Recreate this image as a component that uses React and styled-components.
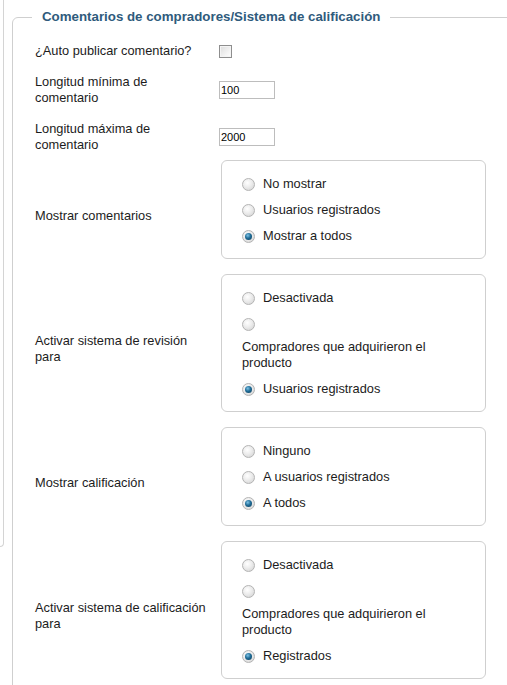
import styled, { createGlobalStyle } from "styled-components";

const GlobalStyle = createGlobalStyle`
    html, body {
        margin: 0;
        padding: 0;
        background: #ffffff;
        overflow: hidden;
    }
    body {
        font-family: "Liberation Sans", Arial, sans-serif;
        font-size: 12.8px;
        color: #1c1c1c;
    }
`;

const settings = [
    {
        id: "showReviews",
        label: "Mostrar comentarios",
        options: [
            { text: "No mostrar" },
            { text: "Usuarios registrados" },
            { text: "Mostrar a todos", checked: true }
        ]
    },
    {
        id: "reviewSystem",
        label: "Activar sistema de revisión para",
        options: [
            { text: "Desactivada" },
            { text: "Compradores que adquirieron el producto", wrapped: true },
            { text: "Usuarios registrados", checked: true }
        ]
    },
    {
        id: "showRating",
        label: "Mostrar calificación",
        options: [
            { text: "Ninguno" },
            { text: "A usuarios registrados" },
            { text: "A todos", checked: true }
        ]
    },
    {
        id: "ratingSystem",
        label: "Activar sistema de calificación para",
        options: [
            { text: "Desactivada" },
            { text: "Compradores que adquirieron el producto", wrapped: true },
            { text: "Registrados", checked: true }
        ]
    }
];

export default function App() {
    return (
        <Page>
            <GlobalStyle />
            <SideEdge />
            <Panel>
                <Legend>Comentarios de compradores/Sistema de calificación</Legend>
                <Rows>
                    <Row>
                        <Label>¿Auto publicar comentario?</Label>
                        <Value>
                            <Checkbox />
                        </Value>
                    </Row>
                    <Row>
                        <Label>Longitud mínima de comentario</Label>
                        <Value>
                            <NumberField defaultValue="100" />
                        </Value>
                    </Row>
                    <Row>
                        <Label>Longitud máxima de comentario</Label>
                        <Value>
                            <NumberField defaultValue="2000" />
                        </Value>
                    </Row>
                    {settings.map(setting => (
                        <BoxRow key={setting.id}>
                            <BoxLabel>{setting.label}</BoxLabel>
                            <OptionBox>
                                {setting.options.map(option => (
                                    option.wrapped ? (
                                        <div key={option.text}>
                                            <Option>
                                                <Radio $checked={option.checked} />
                                            </Option>
                                            <WrappedText>{option.text}</WrappedText>
                                        </div>
                                    ) : (
                                        <Option key={option.text}>
                                            <Radio $checked={option.checked} />
                                            <span>{option.text}</span>
                                        </Option>
                                    )
                                ))}
                            </OptionBox>
                        </BoxRow>
                    ))}
                </Rows>
            </Panel>
        </Page>
    );
}

const Page = styled.div`
    display: flex;
    align-items: flex-start;
    width: 507px;
    height: 685px;
    overflow: hidden;
`;

const SideEdge = styled.div`
    flex: none;
    width: 3px;
    height: 546px;
    border-right: 1px solid #d4d4d4;
    border-bottom: 1px solid #d4d4d4;
    border-bottom-right-radius: 5px;
`;

const Panel = styled.fieldset`
    flex: none;
    width: 560px;
    margin: 9px 0 0 8px;
    padding: 0 0 40px 19px;
    border: 1px solid #cfcfcf;
    border-radius: 6px;
`;

const Legend = styled.legend`
    padding: 0 10px;
    font-size: 13.3px;
    font-weight: bold;
    line-height: 16px;
    color: #2f5b7c;
`;

const Rows = styled.div`
    display: flex;
    flex-direction: column;
    gap: 5px;
    padding: 8px 0 0 3px;
`;

const Row = styled.div`
    display: flex;
    align-items: center;
    padding-top: 10px;
`;

const Label = styled.div`
    width: 176px;
    margin-right: 8px;
    flex: none;
    line-height: 16px;
`;

const Value = styled.div`
    display: flex;
    align-items: center;
`;

const Checkbox = styled.span`
    display: block;
    width: 11px;
    height: 11px;
    border: 1px solid #8e8e8e;
    background: linear-gradient(135deg, #dcdcdc 0%, #f2f2f2 60%, #ffffff 100%);
    box-shadow: inset 0 0 0 1px #f4f4f4;
`;

const NumberField = styled.input`
    box-sizing: border-box;
    width: 56px;
    height: 18px;
    margin: 0;
    padding: 0 1px;
    border: 1px solid #bdbdbd;
    font-family: "Liberation Sans", Arial, sans-serif;
    font-size: 11px;
    color: #000000;
    outline: none;
`;

const BoxRow = styled.div`
    display: flex;
    align-items: center;
    padding: 2px 0 8px;
`;

const BoxLabel = styled(Label)`
    padding-top: 12px;
`;

const OptionBox = styled.div`
    box-sizing: border-box;
    width: 265px;
    margin-left: 2px;
    padding: 10px 0 9px 20px;
    border: 1px solid #cfcfcf;
    border-radius: 6px;
`;

const Option = styled.div`
    display: flex;
    align-items: center;
    gap: 8px;
    height: 26px;
    line-height: 16px;
`;

const Radio = styled.span`
    flex: none;
    position: relative;
    width: 11px;
    height: 11px;
    border: 1px solid #b4b4b4;
    border-radius: 50%;
    background: radial-gradient(circle at 40% 35%, #ffffff 0%, #ececec 45%, #cfcfcf 100%);
    &::after {
        content: "";
        display: ${props => props.$checked ? "block" : "none"};
        position: absolute;
        left: 2px;
        top: 2px;
        width: 7px;
        height: 7px;
        border-radius: 50%;
        background: radial-gradient(circle at 40% 35%, #7fc3e6 0%, #1f6c97 45%, #0d3954 100%);
    }
`;

const WrappedText = styled.div`
    width: 200px;
    padding: 2px 0 5px;
    line-height: 16px;
`;
